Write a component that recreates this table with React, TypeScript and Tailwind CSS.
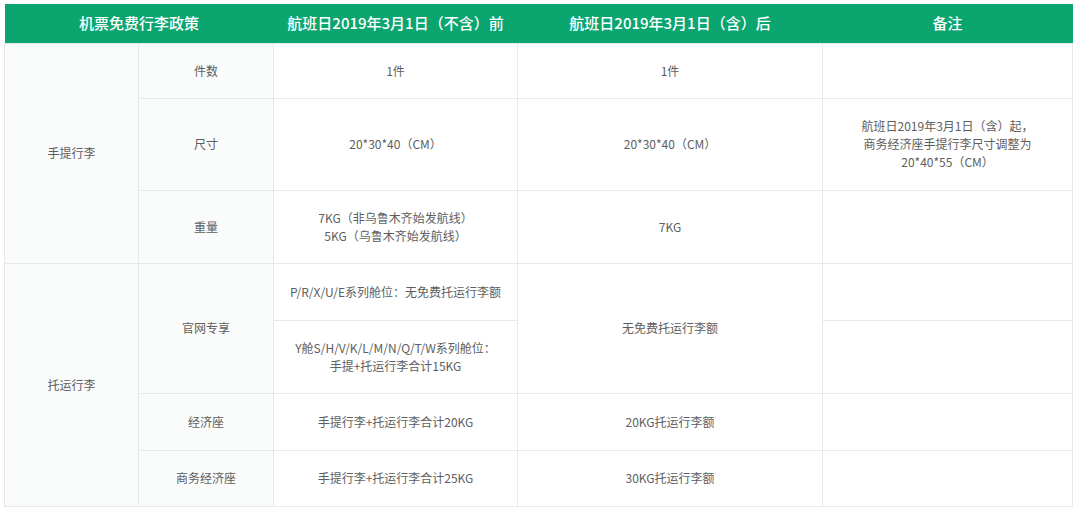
import React from "react";

const font = { fontFamily: '"Noto Sans CJK SC", "Noto Sans", sans-serif' };

export default function App() {
  const td = "border border-[#e6e8ea] text-center align-middle text-[12px] leading-[18px] text-[#5e5e5e]";
  const lab = td + " bg-[#fafbfb]";
  const th = "text-white text-[15px] font-medium text-center";
  return (
    <div className="w-[1080px] h-[507px] bg-white pl-[4px] pt-[4px]" style={font}>
      <table className="table-fixed border-collapse w-[1068px]">
        <colgroup>
          <col className="w-[134px]" />
          <col className="w-[135px]" />
          <col className="w-[244px]" />
          <col className="w-[305px]" />
          <col className="w-[250px]" />
        </colgroup>
        <thead>
          <tr className="h-[39px] bg-[#0ba56f]">
            <th colSpan={2} className={th}>机票免费行李政策</th>
            <th className={th}>航班日2019年3月1日（不含）前</th>
            <th className={th}>航班日2019年3月1日（含）后</th>
            <th className={th}>备注</th>
          </tr>
        </thead>
        <tbody>
          <tr className="h-[55px]">
            <td rowSpan={3} className={lab}>手提行李</td>
            <td className={lab}>件数</td>
            <td className={td}>1件</td>
            <td className={td}>1件</td>
            <td className={td}></td>
          </tr>
          <tr className="h-[92px]">
            <td className={lab}>尺寸</td>
            <td className={td}>20*30*40（CM）</td>
            <td className={td}>20*30*40（CM）</td>
            <td className={td}>
              航班日2019年3月1日（含）起，
              <br />
              商务经济座手提行李尺寸调整为
              <br />
              20*40*55（CM）
            </td>
          </tr>
          <tr className="h-[73px]">
            <td className={lab}>重量</td>
            <td className={td}>
              7KG（非乌鲁木齐始发航线）
              <br />
              5KG（乌鲁木齐始发航线）
            </td>
            <td className={td}>7KG</td>
            <td className={td}></td>
          </tr>
          <tr className="h-[57px]">
            <td rowSpan={4} className={lab}>托运行李</td>
            <td rowSpan={2} className={lab}>官网专享</td>
            <td className={td}>P/R/X/U/E系列舱位：无免费托运行李额</td>
            <td rowSpan={2} className={td}>无免费托运行李额</td>
            <td className={td}></td>
          </tr>
          <tr className="h-[73px]">
            <td className={td}>
              Y舱S/H/V/K/L/M/N/Q/T/W系列舱位：
              <br />
              手提+托运行李合计15KG
            </td>
            <td className={td}></td>
          </tr>
          <tr className="h-[57px]">
            <td className={lab}>经济座</td>
            <td className={td}>手提行李+托运行李合计20KG</td>
            <td className={td}>20KG托运行李额</td>
            <td className={td}></td>
          </tr>
          <tr className="h-[56px]">
            <td className={lab}>商务经济座</td>
            <td className={td}>手提行李+托运行李合计25KG</td>
            <td className={td}>30KG托运行李额</td>
            <td className={td}></td>
          </tr>
        </tbody>
      </table>
    </div>
  );
}
